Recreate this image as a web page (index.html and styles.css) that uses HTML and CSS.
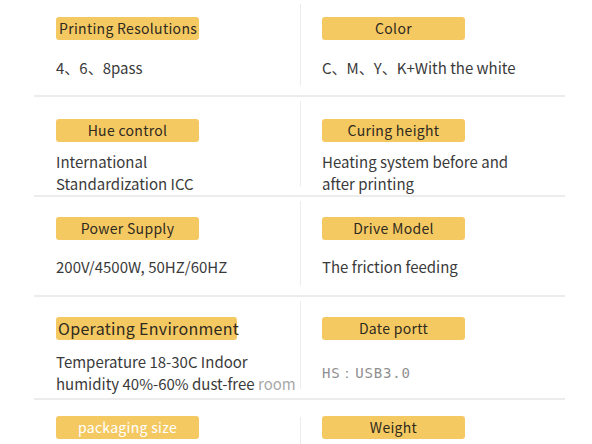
FILE: index.html
```html
<!DOCTYPE html>
<html>
<head>
<meta charset="utf-8">
<link rel="stylesheet" href="styles.css">
</head>
<body>
<div class="table">
  <div class="row r1">
    <div class="cell">
      <div class="tag tag-left">Printing Resolutions</div>
      <div class="body"><p>4、6、8pass</p></div>
    </div>
    <div class="cell right">
      <div class="tag">Color</div>
      <div class="body"><p>C、M、Y、K+With the white</p></div>
    </div>
  </div>
  <div class="row r2">
    <div class="cell">
      <div class="tag">Hue control</div>
      <div class="body"><p>International<br>Standardization ICC</p></div>
    </div>
    <div class="cell right">
      <div class="tag">Curing height</div>
      <div class="body"><p>Heating system before and<br>after printing</p></div>
    </div>
  </div>
  <div class="row r3">
    <div class="cell">
      <div class="tag">Power Supply</div>
      <div class="body"><p>200V/4500W, 50HZ/60HZ</p></div>
    </div>
    <div class="cell right">
      <div class="tag">Drive Model</div>
      <div class="body"><p>The friction feeding</p></div>
    </div>
  </div>
  <div class="row r4">
    <div class="cell">
      <div class="tag tag-big">Operating Environment</div>
      <div class="body"><p>Temperature 18-30C Indoor<br>humidity 40%-60% dust-free <span class="faded">room</span></p></div>
    </div>
    <div class="cell right">
      <div class="tag">Date portt</div>
      <div class="body"><p class="mono">HS：USB3.0</p></div>
    </div>
  </div>
  <div class="row r5 last">
    <div class="cell">
      <div class="tag tag-white">packaging size</div>
    </div>
    <div class="cell right">
      <div class="tag">Weight</div>
    </div>
  </div>
</div>
</body>
</html>
```
FILE: styles.css
```css
* { box-sizing: border-box; }
html, body { margin: 0; padding: 0; background: #fff; }
body {
  width: 592px;
  height: 444px;
  overflow: hidden;
  font-family: "Noto Sans CJK SC", "Noto Sans", sans-serif;
  color: #333;
}
.table {
  margin-left: 34px;
  width: 531px;
}
.row {
  display: grid;
  grid-template-columns: 266px 265px;
  border-bottom: 2px solid #ececec;
}
.r1 { height: 97px; }
.r2 { height: 100px; }
.r3 { height: 100px; }
.r4 { height: 103px; }
.last { border-bottom: none; height: 60px; }
.cell {
  display: flex;
  flex-direction: column;
  padding-left: 22px;
}
.r1 .cell { padding-top: 17px; }
.r2 .cell { padding-top: 22px; }
.r3 .cell { padding-top: 20px; }
.r4 .cell { padding-top: 20px; }
.r5 .cell { padding-top: 16px; }
.right { position: relative; }
.right::before {
  content: "";
  position: absolute;
  left: 0;
  top: 4px;
  bottom: 9px;
  width: 1px;
  background: #ececec;
}
.r5 .right::before { bottom: 0; top: 17px; }
.tag {
  width: 143px;
  height: 23px;
  background: #f5c962;
  border-radius: 3px;
  font-size: 14px;
  letter-spacing: 0.3px;
  line-height: 23px;
  text-align: center;
  color: #2e2a20;
  white-space: nowrap;
  flex: none;
}
.tag-left { text-align: left; padding-left: 3px; }
.tag-big { width: 181px; font-size: 16px; text-align: left; padding-left: 2px; }
.tag-white { color: #fff; }
.body {
  flex: 1;
  display: flex;
  align-items: center;
}
.r2 .body { padding-top: 9px; }
.r4 .body { padding-top: 7px; }
.r3 .body { padding-bottom: 2px; }
.body p {
  margin: 0;
  font-size: 15px;
  line-height: 22px;
  color: #3a3a3a;
}
.faded { color: #a8a8a8; }
.body .mono {
  font-family: "DejaVu Sans Mono", monospace;
  font-size: 14px;
  letter-spacing: 0.8px;
  color: #8f8f8f;
}
```
